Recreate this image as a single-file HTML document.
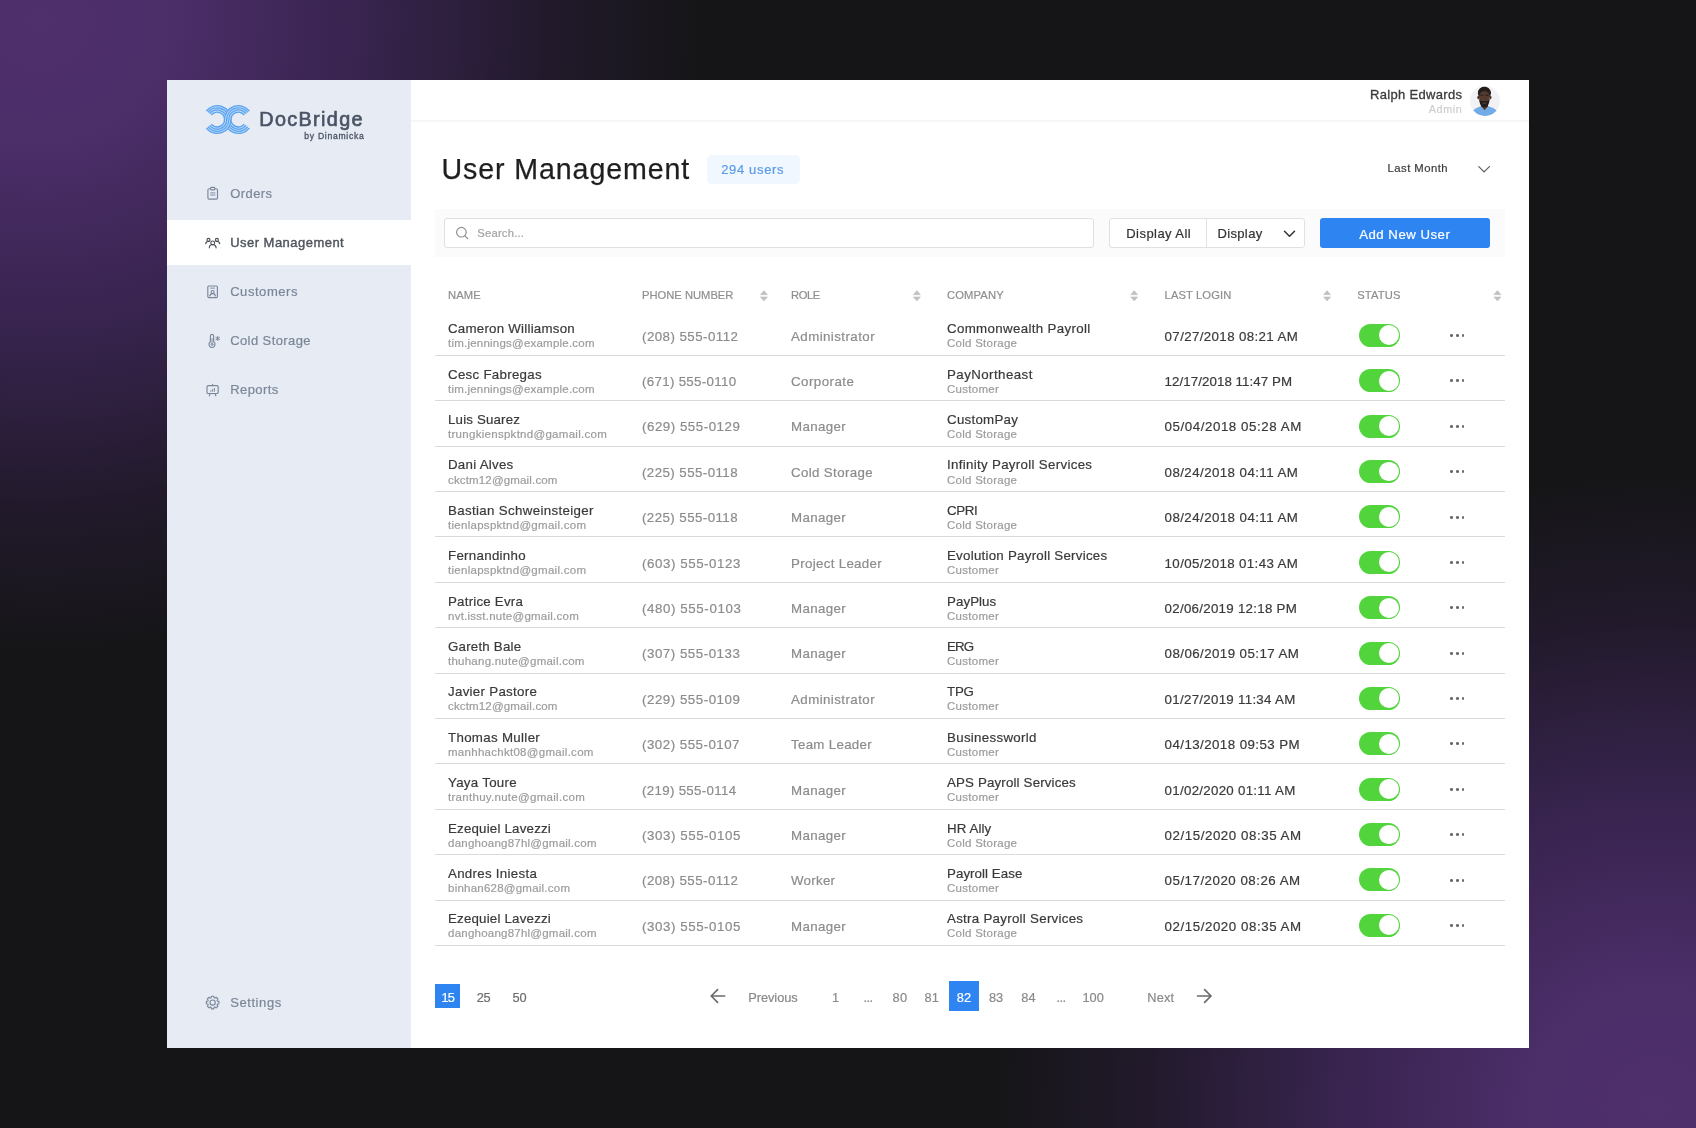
<!DOCTYPE html>
<html lang="en"><head><meta charset="utf-8"><title>DocBridge - User Management</title>
<style>
html,body{margin:0;padding:0}
body{width:1696px;height:1128px;overflow:hidden;position:relative;background:#151517;font-family:'Liberation Sans',sans-serif}
#bg{position:absolute;left:0;top:0;width:1696px;height:1128px;
 background:
  radial-gradient(ellipse 665px 635px at 40px 20px, #4f306d 0%, #4b2d68 20%, #38244f 48%, #221a2c 76%, rgba(21,21,23,0) 100%),
  radial-gradient(ellipse 665px 635px at 1656px 1108px, #4f306d 0%, #4b2d68 20%, #38244f 48%, #221a2c 76%, rgba(21,21,23,0) 100%),
  #151517}
#card{position:absolute;left:0;top:0;width:1696px;height:1128px;will-change:transform}
#panel{position:absolute;left:167px;top:80px;width:1362px;height:968px;background:#fff}
#side{position:absolute;left:167px;top:80px;width:244px;height:968px;background:#e6ebf4}
#active{position:absolute;left:167px;top:220px;width:244px;height:45px;background:#fff}
#topline{position:absolute;left:411px;top:120px;width:1118px;height:2px;background:#f6f6f7}
.t{position:absolute;white-space:pre;line-height:20px;font-family:'Liberation Sans',sans-serif;-webkit-text-stroke:0.2px}
.ln{position:absolute;left:435px;width:1070px;height:1px;background:#dadada}
.tg{position:absolute;left:1358.5px;width:41.7px;height:23px;border-radius:12px;background:#52d53c}
.tg i{position:absolute;right:1.6px;top:1.6px;width:19.8px;height:19.8px;border-radius:50%;background:#fff}
.dots{position:absolute;left:1450.2px;width:16px;height:3px}
.dots i{position:absolute;top:0;width:2.6px;height:2.6px;border-radius:50%;background:#6a6a6a}
.dots i:nth-child(1){left:0}.dots i:nth-child(2){left:5.8px}.dots i:nth-child(3){left:11.6px}
#band{position:absolute;left:435px;top:209px;width:1070px;height:48px;background:#fbfbfb}
#search{position:absolute;left:443.5px;top:218px;width:650px;height:29.5px;box-sizing:border-box;border:1px solid #e0e0e0;border-radius:3px;background:#fff}
#dgroup{position:absolute;left:1109px;top:218px;width:195.5px;height:30px;box-sizing:border-box;border:1px solid #e1e1e1;border-radius:3px;background:#fff}
#ddiv{position:absolute;left:1206px;top:219px;width:1px;height:28px;background:#e2e2e2}
#addbtn{position:absolute;left:1320px;top:218px;width:170px;height:30px;border-radius:3px;background:#2e85f2}
#badge{position:absolute;left:706.5px;top:154.5px;width:93px;height:29px;border-radius:5px;background:#f0f7fe}
.pbox{position:absolute;background:#2e85f2}
svg{position:absolute;overflow:visible}
.ic{fill:none;stroke:#7b8799;stroke-width:1.15;stroke-linecap:round;stroke-linejoin:round}
.ica{fill:none;stroke:#4b5059;stroke-width:1.15;stroke-linecap:round;stroke-linejoin:round}
.sort{fill:#c0c0c0;stroke:#c0c0c0;stroke-width:0.5;stroke-linejoin:round}

</style></head>
<body>
<div id="card">
<div id="bg"></div>
<div id="panel"></div>
<div id="side"></div>
<div id="active"></div>
<div id="topline"></div>
<div id="badge"></div>
<div id="band"></div>
<div id="search"></div>
<div id="dgroup"></div>
<div id="ddiv"></div>
<div id="addbtn"></div>
<div class="pbox" style="left:435px;top:984px;width:24.5px;height:24px"></div>
<div class="pbox" style="left:949px;top:981px;width:30px;height:30px"></div>
<svg width="1696" height="1128" style="left:0;top:0" viewBox="0 0 1696 1128">
<path d="M208.85 113.02A10.60 10.60 0 0 1 227.80 119.55A10.60 10.60 0 0 0 246.75 126.08" fill="none" stroke="#bcdcf9" stroke-width="7.6"/>
<g fill="none" stroke="#5fa4f0" stroke-width="1.35"><path d="M211.40 115.02A7.36 7.36 0 0 1 224.56 119.55A13.84 13.84 0 0 0 249.31 128.07 M209.70 113.69A9.52 9.52 0 0 1 226.72 119.55A11.68 11.68 0 0 0 247.60 126.74 M208.00 112.36A11.68 11.68 0 0 1 228.88 119.55A9.52 9.52 0 0 0 245.90 125.41 M206.29 111.03A13.84 13.84 0 0 1 231.04 119.55A7.36 7.36 0 0 0 244.20 124.08"/></g>
<path d="M246.75 113.02A10.60 10.60 0 0 0 227.80 119.55A10.60 10.60 0 0 1 208.85 126.08" fill="none" stroke="#bcdcf9" stroke-width="7.6"/>
<g fill="none" stroke="#5fa4f0" stroke-width="1.35"><path d="M244.20 115.02A7.36 7.36 0 0 0 231.04 119.55A13.84 13.84 0 0 1 206.29 128.07 M245.90 113.69A9.52 9.52 0 0 0 228.88 119.55A11.68 11.68 0 0 1 208.00 126.74 M247.60 112.36A11.68 11.68 0 0 0 226.72 119.55A9.52 9.52 0 0 1 209.70 125.41 M249.31 111.03A13.84 13.84 0 0 0 224.56 119.55A7.36 7.36 0 0 1 211.40 124.08"/></g>
<rect class="ic" x="207.9" y="188.7" width="9.6" height="10.4" rx="1.2"/><rect class="ic" x="210.7" y="187.4" width="4" height="2.5" rx="0.7" style="fill:#e6ebf4"/><path class="ic" d="M210.6 192.9H215M210.6 195H215" style="stroke-width:0.9"/>
<g class="ica"><circle cx="212.7" cy="242.9" r="1.9"/><path d="M209.3 247.8a3.4 3.3 0 0 1 6.8 0"/><circle cx="208.5" cy="239.9" r="1.5"/><path d="M205.7 243.6a2.8 2.6 0 0 1 3.6-2.2"/><circle cx="216.9" cy="239.9" r="1.5"/><path d="M219.7 243.6a2.8 2.6 0 0 0-3.6-2.2"/></g>
<g class="ic"><rect x="207.8" y="286" width="9.6" height="11.6" rx="1.1"/><path d="M210.6 288.1H214.6" style="stroke-width:0.9"/><circle cx="212.6" cy="292" r="1.5"/><path d="M209.9 296a2.7 2.4 0 0 1 5.4 0"/></g>
<g class="ic"><path d="M210.4 341.8V336a1.6 1.6 0 0 1 3.2 0V341.8a3 3 0 1 1-3.2 0Z"/><circle cx="212" cy="344.4" r="1" style="stroke-width:0.9"/><path d="M212 338.6V343.2" style="stroke-width:0.9"/><path d="M217.7 336.4V340.6M215.9 337.45L219.5 339.55M219.5 337.45L215.9 339.55" style="stroke-width:1"/></g>
<g class="ic"><rect x="207" y="385.6" width="11.2" height="7.9" rx="1.3"/><path d="M212.6 384.2V385.6M210.3 393.6L209.3 395.8M214.9 393.6L215.9 395.8"/><path d="M210.8 391.3V390.6M212.6 391.3V389.5M214.4 391.3V388.4" style="stroke-width:1"/></g>
<path class="ic" d="M217.43 1001.07L218.93 1001.34L218.93 1003.76L217.43 1004.03L217.07 1004.88L217.95 1006.14L216.24 1007.85L214.98 1006.97L214.13 1007.33L213.86 1008.83L211.44 1008.83L211.17 1007.33L210.32 1006.97L209.06 1007.85L207.35 1006.14L208.23 1004.88L207.87 1004.03L206.37 1003.76L206.37 1001.34L207.87 1001.07L208.23 1000.22L207.35 998.96L209.06 997.25L210.32 998.13L211.17 997.77L211.44 996.27L213.86 996.27L214.13 997.77L214.98 998.13L216.24 997.25L217.95 998.96L217.07 1000.22Z"/><circle class="ic" cx="212.65" cy="1002.55" r="2.6"/>
<g fill="none" stroke="#8f8f8f" stroke-width="1.2" stroke-linecap="round"><circle cx="461.4" cy="232.2" r="4.8"/><path d="M465 235.9L467.6 238.5"/></g>
<path d="M1478.8 166.6L1484.1 171.9L1489.4 166.6" fill="none" stroke="#5a5a5a" stroke-width="1.2" stroke-linecap="round" stroke-linejoin="round"/>
<path d="M1284.5 231.3L1289.5 236.3L1294.5 231.3" fill="none" stroke="#333" stroke-width="1.5" stroke-linecap="round" stroke-linejoin="round"/>
<path class="sort" d="M760.3 294.7L763.9 290.6L767.5 294.7Z"/><path class="sort" d="M760.3 296.9L763.9 301L767.5 296.9Z"/>
<path class="sort" d="M913.3 294.7L916.9 290.6L920.5 294.7Z"/><path class="sort" d="M913.3 296.9L916.9 301L920.5 296.9Z"/>
<path class="sort" d="M1130.6 294.7L1134.2 290.6L1137.8 294.7Z"/><path class="sort" d="M1130.6 296.9L1134.2 301L1137.8 296.9Z"/>
<path class="sort" d="M1323.5 294.7L1327.1 290.6L1330.7 294.7Z"/><path class="sort" d="M1323.5 296.9L1327.1 301L1330.7 296.9Z"/>
<path class="sort" d="M1493.8 294.7L1497.4 290.6L1501.0 294.7Z"/><path class="sort" d="M1493.8 296.9L1497.4 301L1501.0 296.9Z"/>
<g fill="none" stroke="#6b6b6b" stroke-width="1.7" stroke-linecap="round" stroke-linejoin="round"><path d="M724.6 996H711.2M717.6 989.6L711.2 996L717.6 1002.4"/><path d="M1197.6 996H1211M1204.6 989.6L1211 996L1204.6 1002.4"/></g>
<defs><clipPath id="av"><circle cx="1485" cy="101" r="15"/></clipPath></defs><circle cx="1485" cy="101" r="15" fill="#f2f2f5"/><g clip-path="url(#av)"><path d="M1472 117V111.5C1474 108.8 1478.5 107 1481.3 106L1484.6 110.5L1488 106C1491 107 1495.5 108.8 1498 111.5V117Z" fill="#72ace6"/><path d="M1481.2 103H1488V106.2L1484.6 110.6L1481.2 106.2Z" fill="#5a3c2f"/><ellipse cx="1484.4" cy="93.2" rx="6.5" ry="6.2" fill="#2a2322"/><ellipse cx="1478.3" cy="97.6" rx="1" ry="1.8" fill="#4a3329"/><ellipse cx="1490.5" cy="97.6" rx="1" ry="1.8" fill="#4a3329"/><ellipse cx="1484.4" cy="97.8" rx="5.4" ry="6.8" fill="#553b2f"/><path d="M1479.2 99.3C1479.5 104.8 1481.6 107.6 1484.4 107.6C1487.2 107.6 1489.3 104.8 1489.6 99.3C1488.2 101.6 1486.6 101 1484.4 101C1482.2 101 1480.6 101.6 1479.2 99.3Z" fill="#241d1c"/><path d="M1478.1 94C1478.1 88.7 1481 86.7 1484.4 86.7C1487.8 86.7 1490.7 88.7 1490.7 94C1489.2 91.6 1487 90.9 1484.4 90.9C1481.8 90.9 1479.6 91.6 1478.1 94Z" fill="#231d1c"/><path d="M1480.4 95.2h3M1485.4 95.2h3" stroke="#2b1f1b" stroke-width="1.1" fill="none"/><path d="M1482.6 103.2h3.6" stroke="#6b4a40" stroke-width="0.8" fill="none"/></g>
</svg>

<div class="ln" style="top:354.90px"></div>
<div class="tg" style="top:323.80px"><i></i></div>
<div class="dots" style="top:334.20px"><i></i><i></i><i></i></div>
<div class="ln" style="top:400.28px"></div>
<div class="tg" style="top:369.18px"><i></i></div>
<div class="dots" style="top:379.20px"><i></i><i></i><i></i></div>
<div class="ln" style="top:445.67px"></div>
<div class="tg" style="top:414.57px"><i></i></div>
<div class="dots" style="top:425.20px"><i></i><i></i><i></i></div>
<div class="ln" style="top:491.05px"></div>
<div class="tg" style="top:459.95px"><i></i></div>
<div class="dots" style="top:470.20px"><i></i><i></i><i></i></div>
<div class="ln" style="top:536.44px"></div>
<div class="tg" style="top:505.34px"><i></i></div>
<div class="dots" style="top:516.20px"><i></i><i></i><i></i></div>
<div class="ln" style="top:581.82px"></div>
<div class="tg" style="top:550.72px"><i></i></div>
<div class="dots" style="top:561.20px"><i></i><i></i><i></i></div>
<div class="ln" style="top:627.21px"></div>
<div class="tg" style="top:596.11px"><i></i></div>
<div class="dots" style="top:606.20px"><i></i><i></i><i></i></div>
<div class="ln" style="top:672.60px"></div>
<div class="tg" style="top:641.50px"><i></i></div>
<div class="dots" style="top:652.20px"><i></i><i></i><i></i></div>
<div class="ln" style="top:717.98px"></div>
<div class="tg" style="top:686.88px"><i></i></div>
<div class="dots" style="top:697.20px"><i></i><i></i><i></i></div>
<div class="ln" style="top:763.37px"></div>
<div class="tg" style="top:732.26px"><i></i></div>
<div class="dots" style="top:742.20px"><i></i><i></i><i></i></div>
<div class="ln" style="top:808.75px"></div>
<div class="tg" style="top:777.65px"><i></i></div>
<div class="dots" style="top:788.20px"><i></i><i></i><i></i></div>
<div class="ln" style="top:854.13px"></div>
<div class="tg" style="top:823.03px"><i></i></div>
<div class="dots" style="top:833.20px"><i></i><i></i><i></i></div>
<div class="ln" style="top:899.52px"></div>
<div class="tg" style="top:868.42px"><i></i></div>
<div class="dots" style="top:879.20px"><i></i><i></i><i></i></div>
<div class="ln" style="top:944.90px"></div>
<div class="tg" style="top:913.80px"><i></i></div>
<div class="dots" style="top:924.20px"><i></i><i></i><i></i></div>
<span class="t" style="left:259.30px;top:109px;font-size:19.8px;color:#4a5364;letter-spacing:1.360px;-webkit-text-stroke:0.65px;">DocBridge</span>
<span class="t" style="left:304.30px;top:126px;font-size:8.6px;color:#4a5364;letter-spacing:0.717px;-webkit-text-stroke:0.3px;">by Dinamicka</span>
<span class="t" style="left:230.20px;top:184px;font-size:13px;color:#7b8799;letter-spacing:0.428px;">Orders</span>
<span class="t" style="left:230.20px;top:233px;font-size:13px;color:#4d525b;letter-spacing:0.470px;-webkit-text-stroke:0.38px;">User Management</span>
<span class="t" style="left:230.20px;top:282px;font-size:13px;color:#7b8799;letter-spacing:0.549px;">Customers</span>
<span class="t" style="left:230.20px;top:331px;font-size:13px;color:#7b8799;letter-spacing:0.409px;">Cold Storage</span>
<span class="t" style="left:230.20px;top:380px;font-size:13px;color:#7b8799;letter-spacing:0.438px;">Reports</span>
<span class="t" style="left:230.20px;top:993px;font-size:13px;color:#7b8799;letter-spacing:0.577px;">Settings</span>
<span class="t" style="left:1370.00px;top:85px;font-size:13px;color:#3b3b3d;letter-spacing:0.326px;-webkit-text-stroke:0.32px;">Ralph Edwards</span>
<span class="t" style="left:1428.80px;top:99px;font-size:10.8px;color:#cdcdcd;letter-spacing:0.598px;">Admin</span>
<span class="t" style="left:441.40px;top:159px;font-size:28.6px;color:#1f1f21;letter-spacing:0.905px;-webkit-text-stroke:0.25px;">User Management</span>
<span class="t" style="left:721.20px;top:160px;font-size:13px;color:#5b9be8;letter-spacing:0.656px;">294 users</span>
<span class="t" style="left:1387.50px;top:158px;font-size:11.3px;color:#3b3b3d;letter-spacing:0.471px;">Last Month</span>
<span class="t" style="left:477.30px;top:223px;font-size:11.3px;color:#a3a3a3;letter-spacing:0.176px;">Search...</span>
<span class="t" style="left:1126.30px;top:224px;font-size:13px;color:#333335;letter-spacing:0.439px;">Display All</span>
<span class="t" style="left:1217.40px;top:224px;font-size:13px;color:#333335;letter-spacing:0.368px;">Display</span>
<span class="t" style="left:1359.20px;top:225px;font-size:13.2px;color:#ffffff;letter-spacing:0.514px;">Add New User</span>
<span class="t" style="left:448.00px;top:285px;font-size:11.2px;color:#8f8f8f;letter-spacing:0.118px;">NAME</span>
<span class="t" style="left:642.00px;top:285px;font-size:11.2px;color:#8f8f8f;letter-spacing:0.002px;">PHONE NUMBER</span>
<span class="t" style="left:791.00px;top:285px;font-size:11.2px;color:#8f8f8f;letter-spacing:-0.417px;">ROLE</span>
<span class="t" style="left:947.00px;top:285px;font-size:11.2px;color:#8f8f8f;letter-spacing:0.150px;">COMPANY</span>
<span class="t" style="left:1164.60px;top:285px;font-size:11.2px;color:#8f8f8f;letter-spacing:0.110px;">LAST LOGIN</span>
<span class="t" style="left:1357.20px;top:285px;font-size:11.2px;color:#8f8f8f;letter-spacing:0.153px;">STATUS</span>
<span class="t" style="left:448.00px;top:319px;font-size:13.3px;color:#3a3a3c;letter-spacing:0.240px;">Cameron Williamson</span>
<span class="t" style="left:448.00px;top:333px;font-size:11.5px;color:#9c9c9c;letter-spacing:0.219px;">tim.jennings@example.com</span>
<span class="t" style="left:642.00px;top:327px;font-size:13.3px;color:#8c8c8c;letter-spacing:0.460px;">(208) 555-0112</span>
<span class="t" style="left:791.00px;top:327px;font-size:13.3px;color:#8c8c8c;letter-spacing:0.436px;">Administrator</span>
<span class="t" style="left:947.00px;top:319px;font-size:13.3px;color:#3a3a3c;letter-spacing:0.339px;">Commonwealth Payroll</span>
<span class="t" style="left:947.00px;top:333px;font-size:11.5px;color:#9c9c9c;letter-spacing:0.256px;">Cold Storage</span>
<span class="t" style="left:1164.60px;top:327px;font-size:13.3px;color:#3a3a3c;letter-spacing:0.377px;">07/27/2018 08:21 AM</span>
<span class="t" style="left:448.00px;top:365px;font-size:13.3px;color:#3a3a3c;letter-spacing:0.287px;">Cesc Fabregas</span>
<span class="t" style="left:448.00px;top:379px;font-size:11.5px;color:#9c9c9c;letter-spacing:0.219px;">tim.jennings@example.com</span>
<span class="t" style="left:642.00px;top:372px;font-size:13.3px;color:#8c8c8c;letter-spacing:0.318px;">(671) 555-0110</span>
<span class="t" style="left:791.00px;top:372px;font-size:13.3px;color:#8c8c8c;letter-spacing:0.473px;">Corporate</span>
<span class="t" style="left:947.00px;top:365px;font-size:13.3px;color:#3a3a3c;letter-spacing:0.436px;">PayNortheast</span>
<span class="t" style="left:947.00px;top:379px;font-size:11.5px;color:#9c9c9c;letter-spacing:0.280px;">Customer</span>
<span class="t" style="left:1164.60px;top:372px;font-size:13.3px;color:#3a3a3c;letter-spacing:0.070px;">12/17/2018 11:47 PM</span>
<span class="t" style="left:448.00px;top:410px;font-size:13.3px;color:#3a3a3c;letter-spacing:0.171px;">Luis Suarez</span>
<span class="t" style="left:448.00px;top:424px;font-size:11.5px;color:#9c9c9c;letter-spacing:0.286px;">trungkienspktnd@gamail.com</span>
<span class="t" style="left:642.00px;top:417px;font-size:13.3px;color:#8c8c8c;letter-spacing:0.533px;">(629) 555-0129</span>
<span class="t" style="left:791.00px;top:417px;font-size:13.3px;color:#8c8c8c;letter-spacing:0.359px;">Manager</span>
<span class="t" style="left:947.00px;top:410px;font-size:13.3px;color:#3a3a3c;letter-spacing:0.274px;">CustomPay</span>
<span class="t" style="left:947.00px;top:424px;font-size:11.5px;color:#9c9c9c;letter-spacing:0.256px;">Cold Storage</span>
<span class="t" style="left:1164.60px;top:417px;font-size:13.3px;color:#3a3a3c;letter-spacing:0.566px;">05/04/2018 05:28 AM</span>
<span class="t" style="left:448.00px;top:455px;font-size:13.3px;color:#3a3a3c;letter-spacing:0.267px;">Dani Alves</span>
<span class="t" style="left:448.00px;top:470px;font-size:11.5px;color:#9c9c9c;letter-spacing:0.158px;">ckctm12@gmail.com</span>
<span class="t" style="left:642.00px;top:463px;font-size:13.3px;color:#8c8c8c;letter-spacing:0.432px;">(225) 555-0118</span>
<span class="t" style="left:791.00px;top:463px;font-size:13.3px;color:#8c8c8c;letter-spacing:0.365px;">Cold Storage</span>
<span class="t" style="left:947.00px;top:455px;font-size:13.3px;color:#3a3a3c;letter-spacing:0.314px;">Infinity Payroll Services</span>
<span class="t" style="left:947.00px;top:470px;font-size:11.5px;color:#9c9c9c;letter-spacing:0.256px;">Cold Storage</span>
<span class="t" style="left:1164.60px;top:463px;font-size:13.3px;color:#3a3a3c;letter-spacing:0.430px;">08/24/2018 04:11 AM</span>
<span class="t" style="left:448.00px;top:501px;font-size:13.3px;color:#3a3a3c;letter-spacing:0.340px;">Bastian Schweinsteiger</span>
<span class="t" style="left:448.00px;top:515px;font-size:11.5px;color:#9c9c9c;letter-spacing:0.280px;">tienlapspktnd@gmail.com</span>
<span class="t" style="left:642.00px;top:508px;font-size:13.3px;color:#8c8c8c;letter-spacing:0.432px;">(225) 555-0118</span>
<span class="t" style="left:791.00px;top:508px;font-size:13.3px;color:#8c8c8c;letter-spacing:0.359px;">Manager</span>
<span class="t" style="left:947.00px;top:501px;font-size:13.3px;color:#3a3a3c;letter-spacing:-0.370px;">CPRI</span>
<span class="t" style="left:947.00px;top:515px;font-size:11.5px;color:#9c9c9c;letter-spacing:0.256px;">Cold Storage</span>
<span class="t" style="left:1164.60px;top:508px;font-size:13.3px;color:#3a3a3c;letter-spacing:0.430px;">08/24/2018 04:11 AM</span>
<span class="t" style="left:448.00px;top:546px;font-size:13.3px;color:#3a3a3c;letter-spacing:0.293px;">Fernandinho</span>
<span class="t" style="left:448.00px;top:560px;font-size:11.5px;color:#9c9c9c;letter-spacing:0.280px;">tienlapspktnd@gmail.com</span>
<span class="t" style="left:642.00px;top:554px;font-size:13.3px;color:#8c8c8c;letter-spacing:0.576px;">(603) 555-0123</span>
<span class="t" style="left:791.00px;top:554px;font-size:13.3px;color:#8c8c8c;letter-spacing:0.323px;">Project Leader</span>
<span class="t" style="left:947.00px;top:546px;font-size:13.3px;color:#3a3a3c;letter-spacing:0.256px;">Evolution Payroll Services</span>
<span class="t" style="left:947.00px;top:560px;font-size:11.5px;color:#9c9c9c;letter-spacing:0.280px;">Customer</span>
<span class="t" style="left:1164.60px;top:554px;font-size:13.3px;color:#3a3a3c;letter-spacing:0.382px;">10/05/2018 01:43 AM</span>
<span class="t" style="left:448.00px;top:592px;font-size:13.3px;color:#3a3a3c;letter-spacing:0.223px;">Patrice Evra</span>
<span class="t" style="left:448.00px;top:606px;font-size:11.5px;color:#9c9c9c;letter-spacing:0.241px;">nvt.isst.nute@gmail.com</span>
<span class="t" style="left:642.00px;top:599px;font-size:13.3px;color:#8c8c8c;letter-spacing:0.604px;">(480) 555-0103</span>
<span class="t" style="left:791.00px;top:599px;font-size:13.3px;color:#8c8c8c;letter-spacing:0.359px;">Manager</span>
<span class="t" style="left:947.00px;top:592px;font-size:13.3px;color:#3a3a3c;letter-spacing:0.074px;">PayPlus</span>
<span class="t" style="left:947.00px;top:606px;font-size:11.5px;color:#9c9c9c;letter-spacing:0.280px;">Customer</span>
<span class="t" style="left:1164.60px;top:599px;font-size:13.3px;color:#3a3a3c;letter-spacing:0.280px;">02/06/2019 12:18 PM</span>
<span class="t" style="left:448.00px;top:637px;font-size:13.3px;color:#3a3a3c;letter-spacing:0.212px;">Gareth Bale</span>
<span class="t" style="left:448.00px;top:651px;font-size:11.5px;color:#9c9c9c;letter-spacing:0.244px;">thuhang.nute@gmail.com</span>
<span class="t" style="left:642.00px;top:644px;font-size:13.3px;color:#8c8c8c;letter-spacing:0.533px;">(307) 555-0133</span>
<span class="t" style="left:791.00px;top:644px;font-size:13.3px;color:#8c8c8c;letter-spacing:0.359px;">Manager</span>
<span class="t" style="left:947.00px;top:637px;font-size:13.3px;color:#3a3a3c;letter-spacing:-0.843px;">ERG</span>
<span class="t" style="left:947.00px;top:651px;font-size:11.5px;color:#9c9c9c;letter-spacing:0.280px;">Customer</span>
<span class="t" style="left:1164.60px;top:644px;font-size:13.3px;color:#3a3a3c;letter-spacing:0.435px;">08/06/2019 05:17 AM</span>
<span class="t" style="left:448.00px;top:682px;font-size:13.3px;color:#3a3a3c;letter-spacing:0.293px;">Javier Pastore</span>
<span class="t" style="left:448.00px;top:696px;font-size:11.5px;color:#9c9c9c;letter-spacing:0.158px;">ckctm12@gmail.com</span>
<span class="t" style="left:642.00px;top:690px;font-size:13.3px;color:#8c8c8c;letter-spacing:0.533px;">(229) 555-0109</span>
<span class="t" style="left:791.00px;top:690px;font-size:13.3px;color:#8c8c8c;letter-spacing:0.436px;">Administrator</span>
<span class="t" style="left:947.00px;top:682px;font-size:13.3px;color:#3a3a3c;letter-spacing:-0.215px;">TPG</span>
<span class="t" style="left:947.00px;top:696px;font-size:11.5px;color:#9c9c9c;letter-spacing:0.280px;">Customer</span>
<span class="t" style="left:1164.60px;top:690px;font-size:13.3px;color:#3a3a3c;letter-spacing:0.288px;">01/27/2019 11:34 AM</span>
<span class="t" style="left:448.00px;top:728px;font-size:13.3px;color:#3a3a3c;letter-spacing:0.320px;">Thomas Muller</span>
<span class="t" style="left:448.00px;top:742px;font-size:11.5px;color:#9c9c9c;letter-spacing:0.280px;">manhhachkt08@gmail.com</span>
<span class="t" style="left:642.00px;top:735px;font-size:13.3px;color:#8c8c8c;letter-spacing:0.504px;">(302) 555-0107</span>
<span class="t" style="left:791.00px;top:735px;font-size:13.3px;color:#8c8c8c;letter-spacing:0.307px;">Team Leader</span>
<span class="t" style="left:947.00px;top:728px;font-size:13.3px;color:#3a3a3c;letter-spacing:0.313px;">Businessworld</span>
<span class="t" style="left:947.00px;top:742px;font-size:11.5px;color:#9c9c9c;letter-spacing:0.280px;">Customer</span>
<span class="t" style="left:1164.60px;top:735px;font-size:13.3px;color:#3a3a3c;letter-spacing:0.438px;">04/13/2018 09:53 PM</span>
<span class="t" style="left:448.00px;top:773px;font-size:13.3px;color:#3a3a3c;letter-spacing:0.285px;">Yaya Toure</span>
<span class="t" style="left:448.00px;top:787px;font-size:11.5px;color:#9c9c9c;letter-spacing:0.289px;">tranthuy.nute@gmail.com</span>
<span class="t" style="left:642.00px;top:781px;font-size:13.3px;color:#8c8c8c;letter-spacing:0.318px;">(219) 555-0114</span>
<span class="t" style="left:791.00px;top:781px;font-size:13.3px;color:#8c8c8c;letter-spacing:0.359px;">Manager</span>
<span class="t" style="left:947.00px;top:773px;font-size:13.3px;color:#3a3a3c;letter-spacing:0.163px;">APS Payroll Services</span>
<span class="t" style="left:947.00px;top:787px;font-size:11.5px;color:#9c9c9c;letter-spacing:0.280px;">Customer</span>
<span class="t" style="left:1164.60px;top:781px;font-size:13.3px;color:#3a3a3c;letter-spacing:0.288px;">01/02/2020 01:11 AM</span>
<span class="t" style="left:448.00px;top:819px;font-size:13.3px;color:#3a3a3c;letter-spacing:0.200px;">Ezequiel Lavezzi</span>
<span class="t" style="left:448.00px;top:833px;font-size:11.5px;color:#9c9c9c;letter-spacing:0.231px;">danghoang87hl@gmail.com</span>
<span class="t" style="left:642.00px;top:826px;font-size:13.3px;color:#8c8c8c;letter-spacing:0.576px;">(303) 555-0105</span>
<span class="t" style="left:791.00px;top:826px;font-size:13.3px;color:#8c8c8c;letter-spacing:0.359px;">Manager</span>
<span class="t" style="left:947.00px;top:819px;font-size:13.3px;color:#3a3a3c;letter-spacing:0.101px;">HR Ally</span>
<span class="t" style="left:947.00px;top:833px;font-size:11.5px;color:#9c9c9c;letter-spacing:0.256px;">Cold Storage</span>
<span class="t" style="left:1164.60px;top:826px;font-size:13.3px;color:#3a3a3c;letter-spacing:0.561px;">02/15/2020 08:35 AM</span>
<span class="t" style="left:448.00px;top:864px;font-size:13.3px;color:#3a3a3c;letter-spacing:0.292px;">Andres Iniesta</span>
<span class="t" style="left:448.00px;top:878px;font-size:11.5px;color:#9c9c9c;letter-spacing:0.232px;">binhan628@gmail.com</span>
<span class="t" style="left:642.00px;top:871px;font-size:13.3px;color:#8c8c8c;letter-spacing:0.460px;">(208) 555-0112</span>
<span class="t" style="left:791.00px;top:871px;font-size:13.3px;color:#8c8c8c;letter-spacing:0.282px;">Worker</span>
<span class="t" style="left:947.00px;top:864px;font-size:13.3px;color:#3a3a3c;letter-spacing:0.062px;">Payroll Ease</span>
<span class="t" style="left:947.00px;top:878px;font-size:11.5px;color:#9c9c9c;letter-spacing:0.280px;">Customer</span>
<span class="t" style="left:1164.60px;top:871px;font-size:13.3px;color:#3a3a3c;letter-spacing:0.509px;">05/17/2020 08:26 AM</span>
<span class="t" style="left:448.00px;top:909px;font-size:13.3px;color:#3a3a3c;letter-spacing:0.200px;">Ezequiel Lavezzi</span>
<span class="t" style="left:448.00px;top:923px;font-size:11.5px;color:#9c9c9c;letter-spacing:0.231px;">danghoang87hl@gmail.com</span>
<span class="t" style="left:642.00px;top:917px;font-size:13.3px;color:#8c8c8c;letter-spacing:0.576px;">(303) 555-0105</span>
<span class="t" style="left:791.00px;top:917px;font-size:13.3px;color:#8c8c8c;letter-spacing:0.359px;">Manager</span>
<span class="t" style="left:947.00px;top:909px;font-size:13.3px;color:#3a3a3c;letter-spacing:0.284px;">Astra Payroll Services</span>
<span class="t" style="left:947.00px;top:923px;font-size:11.5px;color:#9c9c9c;letter-spacing:0.256px;">Cold Storage</span>
<span class="t" style="left:1164.60px;top:917px;font-size:13.3px;color:#3a3a3c;letter-spacing:0.561px;">02/15/2020 08:35 AM</span>
<span class="t" style="left:441.60px;top:988px;font-size:12.8px;color:#ffffff;letter-spacing:-0.967px;">15</span>
<span class="t" style="left:476.70px;top:988px;font-size:12.8px;color:#6e6e6e;letter-spacing:-0.217px;">25</span>
<span class="t" style="left:512.40px;top:988px;font-size:12.8px;color:#6e6e6e;letter-spacing:-0.017px;">50</span>
<span class="t" style="left:748.20px;top:988px;font-size:12.8px;color:#8a8a8a;letter-spacing:-0.037px;">Previous</span>
<span class="t" style="left:832.00px;top:988px;font-size:12.8px;color:#8a8a8a;letter-spacing:-0.525px;">1</span>
<span class="t" style="left:863.50px;top:988px;font-size:12.8px;color:#8a8a8a;letter-spacing:-0.557px;">...</span>
<span class="t" style="left:892.50px;top:988px;font-size:12.8px;color:#8a8a8a;letter-spacing:0.283px;">80</span>
<span class="t" style="left:924.50px;top:988px;font-size:12.8px;color:#8a8a8a;letter-spacing:0.083px;">81</span>
<span class="t" style="left:956.80px;top:988px;font-size:12.8px;color:#ffffff;letter-spacing:0.183px;">82</span>
<span class="t" style="left:988.90px;top:988px;font-size:12.8px;color:#8a8a8a;letter-spacing:-0.017px;">83</span>
<span class="t" style="left:1021.30px;top:988px;font-size:12.8px;color:#8a8a8a;letter-spacing:-0.017px;">84</span>
<span class="t" style="left:1056.40px;top:988px;font-size:12.8px;color:#8a8a8a;letter-spacing:-0.557px;">...</span>
<span class="t" style="left:1082.40px;top:988px;font-size:12.8px;color:#8a8a8a;letter-spacing:0.080px;">100</span>
<span class="t" style="left:1147.30px;top:988px;font-size:12.8px;color:#8a8a8a;letter-spacing:0.172px;">Next</span>
</div>
</body></html>
